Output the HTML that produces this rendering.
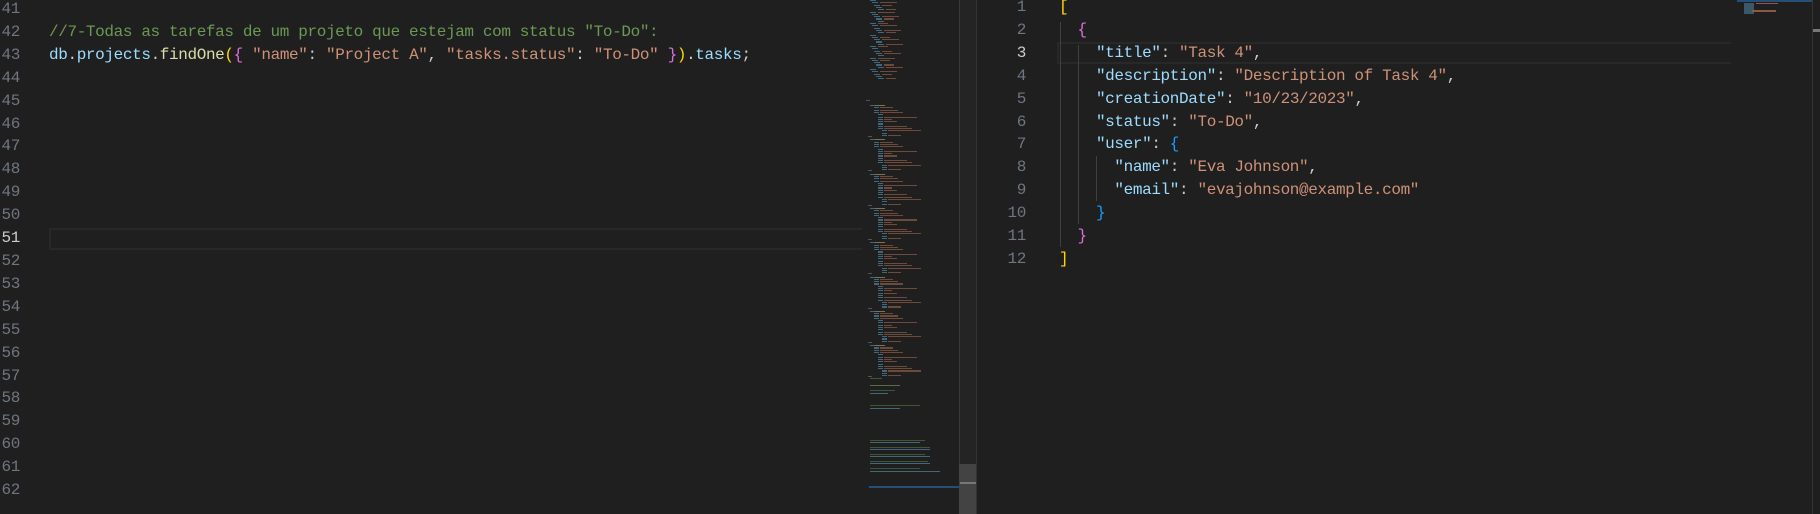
<!DOCTYPE html>
<html><head><meta charset="utf-8"><style>
body{margin:0;width:1820px;height:514px;background:#1f1f1f;overflow:hidden;position:relative;font-family:"Liberation Mono",monospace;}
.code{position:absolute;font-size:16px;letter-spacing:-0.37px;white-space:pre;line-height:22.9px;}
.ln{position:absolute;font-size:16px;letter-spacing:-0.37px;line-height:22.9px;color:#6e7681;text-align:right;white-space:pre;}
.c{color:#6a9955}.s{color:#ce9178}.k{color:#9cdcfe}.p{color:#cccccc}.f{color:#dcdcaa}
.y{color:#ffd700}.m{color:#da70d6}.b{color:#179fff}
.abs{position:absolute}
</style></head><body>
<!-- left editor -->
<div class="abs" style="left:49px;top:228px;width:813px;height:18px;border:2px solid #282828;border-right:none"></div>
<div class="ln" style="left:-20px;top:-2px;width:40px">41
42
43
44
45
46
47
48
49
50
<span style="color:#ccc">51</span>
52
53
54
55
56
57
58
59
60
61
62</div>
<div class="code" style="left:49px;top:-2px"><span class="c"></span>
<span class="c">//7-Todas as tarefas de um projeto que estejam com status "To-Do":</span>
<span class="k">db</span><span class="p">.</span><span class="k">projects</span><span class="p">.</span><span class="f">findOne</span><span class="y">(</span><span class="m">{</span> <span class="s">"name"</span><span class="p">: </span><span class="s">"Project A"</span><span class="p">, </span><span class="s">"tasks.status"</span><span class="p">: </span><span class="s">"To-Do"</span> <span class="m">}</span><span class="y">)</span><span class="p">.</span><span class="k">tasks</span><span class="p">;</span></div>
<!-- left minimap -->
<div class="abs" id="mm" style="left:862px;top:0;width:97px;height:514px;background:#1f1f1f"></div>
<div class="abs" style="left:869px;top:486px;width:90px;height:2px;background:#264f78"></div>
<div class="abs" style="left:959px;top:0;width:17px;height:514px;background:#242424;border-left:1px solid #3a3a3a"></div>
<div class="abs" style="left:959px;top:464px;width:17px;height:50px;background:#434343"></div>
<div class="abs" style="left:960px;top:482px;width:16px;height:2px;background:#777"></div>
<div class="abs" style="left:976px;top:0;width:1px;height:514px;background:#333"></div>
<!-- right editor -->
<div class="abs" style="left:1057px;top:42px;width:672px;height:18px;border:2px solid #282828;border-right:none"></div>
<div class="abs" style="left:1060px;top:22px;width:1px;height:225px;background:#404040"></div>
<div class="abs" style="left:1078px;top:45px;width:1px;height:179px;background:#404040"></div>
<div class="abs" style="left:1096px;top:156px;width:1px;height:45px;background:#404040"></div>
<div class="ln" style="left:980px;top:-4px;width:46px"> 1
 2
<span style="color:#ccc"> 3</span>
 4
 5
 6
 7
 8
 9
10
11
12</div>
<div class="code" style="left:1059px;top:-4px"><span class="y">[</span>
  <span class="m">{</span>
    <span class="k">"title"</span><span class="p">: </span><span class="s">"Task 4"</span><span class="p">,</span>
    <span class="k">"description"</span><span class="p">: </span><span class="s">"Description of Task 4"</span><span class="p">,</span>
    <span class="k">"creationDate"</span><span class="p">: </span><span class="s">"10/23/2023"</span><span class="p">,</span>
    <span class="k">"status"</span><span class="p">: </span><span class="s">"To-Do"</span><span class="p">,</span>
    <span class="k">"user"</span><span class="p">: </span><span class="b">{</span>
      <span class="k">"name"</span><span class="p">: </span><span class="s">"Eva Johnson"</span><span class="p">,</span>
      <span class="k">"email"</span><span class="p">: </span><span class="s">"evajohnson@example.com"</span>
    <span class="b">}</span>
  <span class="m">}</span>
<span class="y">]</span></div>
<!-- right minimap -->
<div class="abs" style="left:1737px;top:0;width:75px;height:2px;background:#264f78"></div>
<div class="abs" style="left:1744px;top:3px;width:10px;height:11px;background:#4f7f99;opacity:.6"></div>
<div class="abs" style="left:1756px;top:3px;width:22px;height:1px;background:#8a5a45"></div>
<div class="abs" style="left:1752px;top:10px;width:24px;height:2px;background:#8a5a45"></div>
<div class="abs" style="left:1812px;top:0;width:1px;height:514px;background:#333"></div>
<div class="abs" style="left:1813px;top:29px;width:7px;height:3px;background:#777"></div>
<script>
var mm=document.getElementById('mm'),h='';
function r(x,y,w,c){h+='<div style="position:absolute;left:'+x+'px;top:'+y+'px;width:'+w+'px;height:1.2px;background:'+c+';opacity:.75"></div>';}
var B='#4f7f99',S='#8a5a45',G='#4a6a3c',P='#666';
for(var y=0;y<80;y+=2.3){var i=Math.round(y/2.3);r(8+(i%5)*2,y,6,B);if(i%3)r(16+(i%5)*2,y,10+(i*7)%14,S);}
r(4,100,4,P);
for(var k=0;k<8;k++){var y0=105+k*34.3;
 r(8,y0,5,B);r(13,y0,10,'#a09060');
 for(var j=1;j<14;j++){var yy=y0+j*2.3;var ind=(j<4)?12:(j<11?16:20);r(ind,yy,5,B);if(j%4!=0)r(ind+6,yy,8+(j*5)%30,S);}
 r(6,y0+31,4,P);}
r(8,378,12,G);r(8,385,30,'#6a8a50');r(8,390,25,G);r(8,393,18,B);
r(8,405,50,G);r(8,408,30,B);
r(8,440,55,G);r(8,442,50,B);r(8,447,60,G);r(8,449,60,B);r(8,454,55,G);r(8,456,60,B);r(8,461,58,G);r(8,463,60,B);r(8,468,50,G);r(8,471,70,B);
mm.innerHTML=h;
</script>
</body></html>
